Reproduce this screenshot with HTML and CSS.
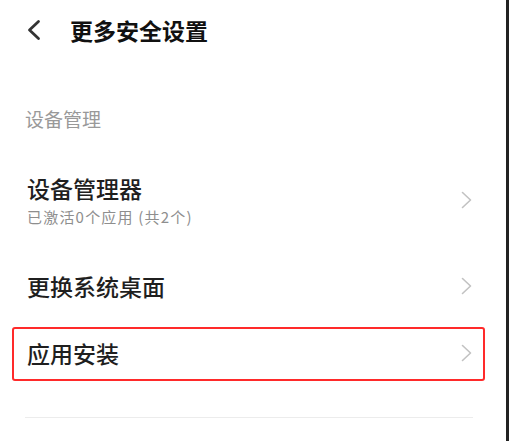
FILE: index.html
```html
<!DOCTYPE html>
<html lang="zh-CN">
<head>
    <meta charset="UTF-8">
    <meta name="viewport" content="width=device-width, initial-scale=1.0">
    <title>更多安全设置</title>
    <link rel="stylesheet" href="styles.css">
</head>
<body>
    <div class="screen">
        <div class="header">
            <svg class="back" width="16" height="22" viewBox="0 0 16 22">
                <polyline points="12.5,2.5 3.5,11 12.5,19.5" fill="none" stroke="#333" stroke-width="2.8" stroke-linecap="round" stroke-linejoin="round"/>
            </svg>
            <h1 class="title">更多安全设置</h1>
        </div>

        <div class="section-label">设备管理</div>

        <div class="item item-tall">
            <div class="item-text">
                <div class="item-title">设备管理器</div>
                <div class="item-sub">已激活0个应用 (共2个)</div>
            </div>
            <svg class="arrow" width="11" height="18" viewBox="0 0 11 18">
                <polyline points="1.5,1.5 9.5,9 1.5,16.5" fill="none" stroke="#c2c2c2" stroke-width="1.6" stroke-linecap="round" stroke-linejoin="round"/>
            </svg>
        </div>

        <div class="item">
            <div class="item-title">更换系统桌面</div>
            <svg class="arrow" width="11" height="18" viewBox="0 0 11 18">
                <polyline points="1.5,1.5 9.5,9 1.5,16.5" fill="none" stroke="#c2c2c2" stroke-width="1.6" stroke-linecap="round" stroke-linejoin="round"/>
            </svg>
        </div>

        <div class="item item-marked">
            <div class="item-title">应用安装</div>
            <svg class="arrow" width="11" height="18" viewBox="0 0 11 18">
                <polyline points="1.5,1.5 9.5,9 1.5,16.5" fill="none" stroke="#c2c2c2" stroke-width="1.6" stroke-linecap="round" stroke-linejoin="round"/>
            </svg>
        </div>

        <div class="divider"></div>
    </div>
</body>
</html>
```

FILE: styles.css
```css
html, body {
    margin: 0;
    padding: 0;
    background: #fff;
}
body {
    font-family: "Noto Sans CJK SC", "Noto Sans", sans-serif;
    color: #1f1f1f;
}
.screen {
    box-sizing: border-box;
    width: 509px;
    min-height: 100vh;
    border-right: 3px solid #222;
    overflow: hidden;
}
.header {
    display: flex;
    align-items: center;
    height: 60px;
    padding-left: 26px;
}
.back {
    margin-right: 28px;
    flex-shrink: 0;
}
.title {
    margin: 0;
    font-size: 23px;
    font-weight: 700;
    color: #111;
    line-height: 30px;
}
.section-label {
    padding: 46px 0 0 25px;
    height: 44px;
    font-size: 19px;
    line-height: 26px;
    color: #999;
}
.item {
    display: flex;
    align-items: center;
    justify-content: space-between;
    height: 72px;
    padding: 0 34px 0 27px;
}
.item-tall {
    height: 100px;
}
.item-title {
    font-size: 23px;
    font-weight: 500;
    line-height: 30px;
}
.item-sub {
    margin-top: 4px;
    font-size: 15px;
    line-height: 20px;
    letter-spacing: 1.2px;
    color: #8e8e8e;
}
.arrow {
    flex-shrink: 0;
}
.item-marked {
    box-sizing: border-box;
    height: 54px;
    margin: 5px 21px 0 12px;
    padding: 0 11px 3px 13px;
    border: 2px solid #ff2a2a;
    border-radius: 3px;
}
.divider {
    height: 1px;
    margin: 36px 33px 0 25px;
    background: #ececec;
}
```
